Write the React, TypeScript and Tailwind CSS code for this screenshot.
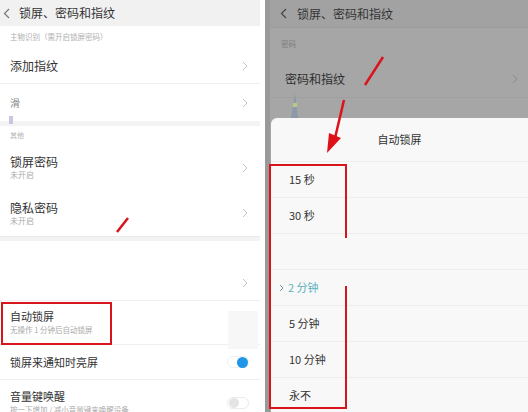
import React from "react";

const font = { fontFamily: '"Noto Sans CJK SC", "Noto Sans", sans-serif' };

function Chevron({ className = "" }: { className?: string }) {
  return (
    <svg width="6" height="10" viewBox="0 0 6 10" className={className}>
      <path d="M1 1 L5 5 L1 9" fill="none" stroke="#c4c4c4" strokeWidth="1" />
    </svg>
  );
}

function Back({ color }: { color: string }) {
  return (
    <svg width="7" height="11" viewBox="0 0 7 11">
      <path d="M6 1 L1.5 5.5 L6 10" fill="none" stroke={color} strokeWidth="1.2" />
    </svg>
  );
}

function LeftPanel() {
  return (
    <div className="relative w-[260px] h-full bg-white flex flex-col overflow-hidden">
      <div className="h-[26px] bg-[#f1f1f1] flex items-center pl-[3px] gap-[9px] shrink-0">
        <Back color="#777" />
        <span className="text-[12px] text-[#333]">锁屏、密码和指纹</span>
      </div>
      <div className="h-[22px] flex items-center pl-[10px] text-[7.5px] text-[#b0b0b0] shrink-0">
        主物识别（需开启锁屏密码）
      </div>
      <div className="h-[36px] flex items-center justify-between pl-[10px] pr-[12px] border-b border-[#efefef] shrink-0">
        <span className="text-[12px] text-[#333]">添加指纹</span>
        <Chevron />
      </div>
      <div className="h-[37px] flex items-center justify-between pl-[10px] pr-[12px] shrink-0">
        <span className="text-[10px] text-[#888]">滑</span>
        <Chevron />
      </div>
      <div className="h-[5px] bg-[#f4f4f4] shrink-0 relative">
        <div className="absolute left-[9px] top-[-5px] w-[4px] h-[8px] bg-[#c6c8e0]" />
      </div>
      <div className="h-[19px] flex items-center pl-[10px] text-[7px] text-[#b0b0b0] shrink-0">
        其他
      </div>
      <div className="h-[45px] flex items-center justify-between pl-[10px] pr-[12px] shrink-0">
        <div className="flex flex-col leading-none">
          <span className="text-[12px] text-[#333]">锁屏密码</span>
          <span className="text-[8px] text-[#aaa] mt-[3px]">未开启</span>
        </div>
        <Chevron />
      </div>
      <div className="h-[46px] flex items-center justify-between pl-[10px] pr-[12px] shrink-0">
        <div className="flex flex-col leading-none">
          <span className="text-[12px] text-[#333]">隐私密码</span>
          <span className="text-[8px] text-[#aaa] mt-[3px]">未开启</span>
        </div>
        <Chevron />
      </div>
      <div className="h-[5px] bg-[#f3f3f3] border-t border-[#eaeaea] shrink-0" />
      <div className="h-[24px] shrink-0" />
      <div className="h-[36px] flex items-center justify-end pr-[12px] border-b border-[#efefef] shrink-0">
        <Chevron />
      </div>
      <div className="h-[44px] flex items-center pl-[10px] border-b border-[#efefef] shrink-0">
        <div className="flex flex-col leading-none">
          <span className="text-[11px] text-[#333]">自动锁屏</span>
          <span className="text-[7.5px] text-[#aaa] mt-[4px]">无操作 1 分钟后自动锁屏</span>
        </div>
      </div>
      <div className="h-[35px] flex items-center justify-between pl-[10px] pr-[11px] border-b border-[#efefef] shrink-0">
        <span className="text-[11px] text-[#333]">锁屏来通知时亮屏</span>
        <div className="w-[22px] h-[12px] rounded-full bg-white border border-[#f0f0f0] flex items-center justify-end">
          <div className="w-[11px] h-[11px] rounded-full bg-[#2196e6]" />
        </div>
      </div>
      <div className="h-[40px] flex items-start justify-between pl-[10px] pr-[11px] pt-[11px] shrink-0">
        <div className="flex flex-col leading-none">
          <span className="text-[11px] text-[#333]">音量键唤醒</span>
          <span className="text-[7.5px] text-[#aaa] mt-[4px] whitespace-nowrap">按一下增加 / 减小音量键来唤醒设备</span>
        </div>
        <div className="w-[22px] h-[12px] mt-[6px] rounded-full bg-white border border-[#ececec] flex items-center pl-[1px]">
          <div className="w-[10px] h-[10px] rounded-full bg-[#e4e4e4]" />
        </div>
      </div>

      <div className="absolute left-[228px] top-[311px] w-[30px] h-[38px] bg-[#f7f7f7]" />
      <div className="absolute left-[1px] top-[302px] w-[111px] h-[43px] border-[2px] border-[#d8141c]" />
      <svg className="absolute left-0 top-0" width="260" height="412">
        <line x1="117" y1="232" x2="128" y2="218" stroke="#d8141c" strokeWidth="2.5" />
      </svg>
    </div>
  );
}

function RightPanel() {
  const rows = ["15 秒", "30 秒", "", "2 分钟", "5 分钟", "10 分钟", "永不"];
  return (
    <div className="relative flex-1 h-full bg-[#a6a6a6] overflow-hidden">
      <div className="absolute left-0 top-0 w-[5px] h-full bg-[#999999]" />
      <div className="h-[28px] flex items-center pl-[15px] gap-[10px] border-b border-[#9c9c9c] bg-[#a2a2a2]">
        <Back color="#444" />
        <span className="text-[12px] text-[#353535]">锁屏、密码和指纹</span>
      </div>
      <div className="h-[32px] flex items-center pl-[16px] text-[7.5px] text-[#7c7c7c]">密码</div>
      <div className="h-[38px] flex items-center justify-between pl-[20px] pr-[10px] border-b border-[#a0a0a0]">
        <span className="text-[12px] text-[#2e2e2e]">密码和指纹</span>
        <svg width="6" height="10" viewBox="0 0 6 10">
          <path d="M1 1 L5 5 L1 9" fill="none" stroke="#8a8a8a" strokeWidth="1" />
        </svg>
      </div>
      <div className="absolute left-[26px] top-[93px] w-[7px] h-[25px]">
        <svg width="7" height="25" viewBox="0 0 7 25">
          <path d="M4 0 L7 25 L0 25 Z" fill="#8e98ac" />
          <rect x="2" y="10" width="4" height="4" fill="#b9c98a" />
        </svg>
      </div>

      <div className="absolute left-[6px] right-0 top-[118px] bottom-0 bg-[#f8f8f8] rounded-tl-[6px] flex flex-col">
        <div className="h-[44px] flex items-center justify-center text-[11px] text-[#333] border-b border-[#ededed] shrink-0">
          自动锁屏
        </div>
        {rows.map((r, i) => (
          <div
            key={i}
            className={`h-[36px] flex items-center shrink-0 border-b border-[#ededed] ${i === 3 ? "pl-[8px]" : "pl-[18px]"}`}
          >
            {i === 3 ? (
              <span className="flex items-center gap-[4px] text-[11px] text-[#5bb0bd]">
                <svg width="5" height="8" viewBox="0 0 5 8">
                  <path d="M1 1 L4 4 L1 7" fill="none" stroke="#6a9ab0" strokeWidth="1" />
                </svg>
                {r}
              </span>
            ) : (
              <span className="text-[11px] text-[#333]">{r}</span>
            )}
          </div>
        ))}
      </div>

      <div className="absolute left-[4px] top-[164px] w-[78px] h-[245px] border-[2px] border-r-0 border-[#d8141c]" />
      <div className="absolute left-[80px] top-[164px] w-[2px] h-[74px] bg-[#d8141c]" />
      <div className="absolute left-[80px] top-[286px] w-[2px] h-[123px] bg-[#d8141c]" />

      <svg className="absolute left-0 top-0" width="264" height="412">
        <line x1="100" y1="85" x2="118" y2="57" stroke="#d8141c" strokeWidth="2.5" />
        <line x1="79" y1="100" x2="70" y2="138" stroke="#e01018" strokeWidth="2.5" />
        <path d="M62 153 L64 133 L76 138 Z" fill="#e01018" />
      </svg>
    </div>
  );
}

export default function App() {
  return (
    <div className="w-[528px] h-[412px] flex bg-white overflow-hidden" style={font}>
      <LeftPanel />
      <div className="w-[5px] h-full bg-white" />
      <RightPanel />
    </div>
  );
}
